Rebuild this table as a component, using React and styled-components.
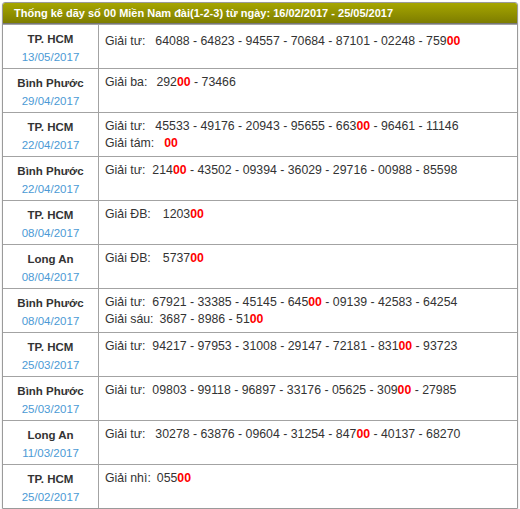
import React from "react";
import styled, { createGlobalStyle } from "styled-components";

const GlobalStyle = createGlobalStyle`
  body {
    margin: 0;
    background: #fff;
    font-family: "Liberation Sans", Arial, sans-serif;
  }
`;

const Wrap = styled.div`
  padding: 2px 2px 0 2px;
  width: 516px;
`;

const Table = styled.div`
  border: 1px solid #9a9a9a;
  border-radius: 3px 3px 0 0;
  box-shadow: 0 1px 2px #d6d6d6;
`;

const Header = styled.div`
  height: 20px;
  line-height: 20px;
  padding-left: 11px;
  background: linear-gradient(#a6a600, #7d7d00);
  border-bottom: 1px solid #777;
  border-radius: 2px 2px 0 0;
  color: #fff;
  font-size: 11px;
  font-weight: bold;
`;

const Row = styled.div`
  display: grid;
  grid-template-columns: 96px 1fr;
  border-top: 1px solid #a3a3a3;
  &:first-of-type {
    border-top: 0;
  }
`;

const Place = styled.div`
  border-right: 1px solid #a3a3a3;
  text-align: center;
  padding: 5px 0 2px;
  line-height: 18px;
`;

const City = styled.div`
  font-size: 11.5px;
  font-weight: bold;
  color: #333;
`;

const Day = styled.div`
  font-size: 11.5px;
  color: #4b9ad5;
`;

const Results = styled.div`
  padding: ${(p) => (p.$first ? "8px" : "5px")} 6px 0 6px;
  font-size: 12.3px;
  line-height: 17px;
  color: #333;
`;

const Line = styled.div`
  white-space: nowrap;
`;

const Label = styled.span`
  display: inline-block;
  margin-right: ${(p) => p.$gap}px;
`;

const Hit = styled.b`
  color: #ff0000;
`;

const rows = [
  { city: "TP. HCM", day: "13/05/2017", lines: [["Giải tư:", 10, "64088 - 64823 - 94557 - 70684 - 87101 - 02248 - 759", "00", ""]] },
  { city: "Bình Phước", day: "29/04/2017", lines: [["Giải ba:", 9, "292", "00", " - 73466"]] },
  { city: "TP. HCM", day: "22/04/2017", lines: [["Giải tư:", 10, "45533 - 49176 - 20943 - 95655 - 663", "00", " - 96461 - 11146"], ["Giải tám:", 10, "", "00", ""]] },
  { city: "Bình Phước", day: "22/04/2017", lines: [["Giải tư:", 7, "214", "00", " - 43502 - 09394 - 36029 - 29716 - 00988 - 85598"]] },
  { city: "TP. HCM", day: "08/04/2017", lines: [["Giải ĐB:", 12, "1203", "00", ""]] },
  { city: "Long An", day: "08/04/2017", lines: [["Giải ĐB:", 12, "5737", "00", ""]] },
  { city: "Bình Phước", day: "08/04/2017", lines: [["Giải tư:", 7, "67921 - 33385 - 45145 - 645", "00", " - 09139 - 42583 - 64254"], ["Giải sáu:", 6, "3687 - 8986 - 51", "00", ""]] },
  { city: "TP. HCM", day: "25/03/2017", lines: [["Giải tư:", 7, "94217 - 97953 - 31008 - 29147 - 72181 - 831", "00", " - 93723"]] },
  { city: "Bình Phước", day: "25/03/2017", lines: [["Giải tư:", 7, "09803 - 99118 - 96897 - 33176 - 05625 - 309", "00", " - 27985"]] },
  { city: "Long An", day: "11/03/2017", lines: [["Giải tư:", 10, "30278 - 63876 - 09604 - 31254 - 847", "00", " - 40137 - 68270"]] },
  { city: "TP. HCM", day: "25/02/2017", lines: [["Giải nhì:", 6, "055", "00", ""]] },
];

export default function App() {
  return (
    <>
      <GlobalStyle />
      <Wrap>
        <Table>
          <Header>
            Thống kê dãy số 00 Miền Nam đài(1-2-3) từ ngày: 16/02/2017 - 25/05/2017
          </Header>
          {rows.map((r, i) => (
            <Row key={i}>
              <Place>
                <City>{r.city}</City>
                <Day>{r.day}</Day>
              </Place>
              <Results $first={i === 0}>
                {r.lines.map(([label, gap, before, hit, after], j) => (
                  <Line key={j}>
                    <Label $gap={gap}>{label}</Label>
                    {before}
                    <Hit>{hit}</Hit>
                    {after}
                  </Line>
                ))}
              </Results>
            </Row>
          ))}
        </Table>
      </Wrap>
    </>
  );
}
